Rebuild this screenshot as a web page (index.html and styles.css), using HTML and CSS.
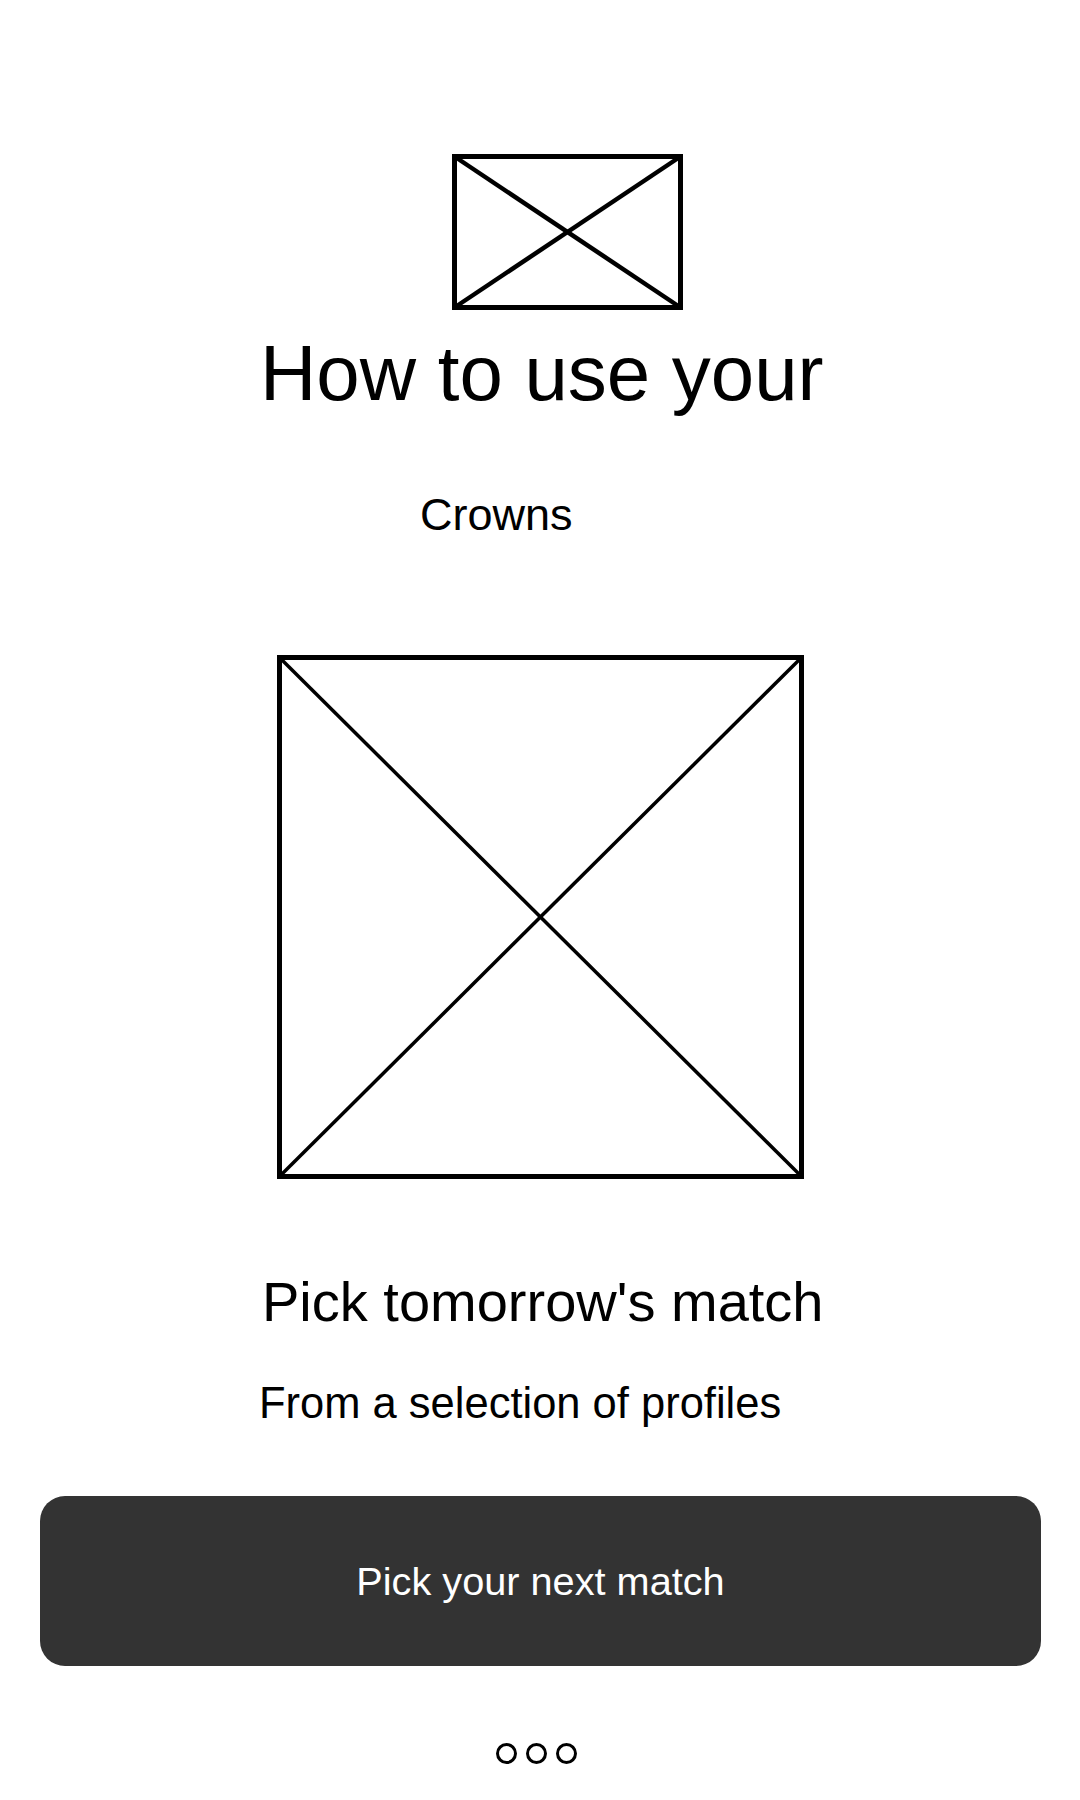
FILE: index.html
```html
<!DOCTYPE html>
<html lang="en">
<head>
<meta charset="utf-8">
<title>How to use your Crowns</title>
<link rel="stylesheet" href="styles.css">
</head>
<body>
<main class="screen">
  <svg class="logo" width="231" height="156" viewBox="0 0 231 156" aria-hidden="true">
    <rect x="2.5" y="2.5" width="226" height="151" fill="none" stroke="#000" stroke-width="5"/>
    <line x1="2.5" y1="2.5" x2="228.5" y2="153.5" stroke="#000" stroke-width="4.5"/>
    <line x1="228.5" y1="2.5" x2="2.5" y2="153.5" stroke="#000" stroke-width="4.5"/>
  </svg>
  <h1 class="title">How to use your</h1>
  <p class="subtitle">Crowns</p>
  <svg class="hero" width="527" height="524" viewBox="0 0 527 524" aria-hidden="true">
    <rect x="2.5" y="2.5" width="522" height="519" fill="none" stroke="#000" stroke-width="5"/>
    <line x1="3" y1="3" x2="524" y2="521" stroke="#000" stroke-width="3.5"/>
    <line x1="524" y1="3" x2="3" y2="521" stroke="#000" stroke-width="3.5"/>
  </svg>
  <h2 class="step-title">Pick tomorrow's match</h2>
  <p class="step-text">From a selection of profiles</p>
  <button class="cta" type="button">Pick your next match</button>
  <div class="dots" aria-hidden="true">
    <span class="dot"></span><span class="dot"></span><span class="dot"></span>
  </div>
</main>
</body>
</html>
```

FILE: styles.css
```css
html, body {
  margin: 0;
  padding: 0;
  background: #fff;
}

body {
  font-family: "Liberation Sans", Arial, sans-serif;
  color: #000;
}

.screen {
  width: 1080px;
  height: 1800px;
  display: flex;
  flex-direction: column;
  align-items: flex-start;
  padding-top: 154px;
  box-sizing: border-box;
}

.logo {
  display: block;
  margin-left: 452px;
}

.title {
  margin: 18px 0 0 260px;
  font-size: 78px;
  line-height: 90px;
  font-weight: 400;
}

.subtitle {
  margin: 72px 0 0 420px;
  font-size: 45px;
  line-height: 50px;
}

.hero {
  display: block;
  margin: 115px 0 0 277px;
}

.step-title {
  margin: 91px 0 0 262px;
  font-size: 56px;
  line-height: 64px;
  font-weight: 400;
}

.step-text {
  margin: 44px 0 0 259px;
  font-size: 43.5px;
  line-height: 50px;
}

.cta {
  margin: 68px 0 0 40px;
  width: 1001px;
  height: 170px;
  border: 0;
  border-radius: 25px;
  background: #333333;
  color: #fff;
  font-family: "Liberation Sans", Arial, sans-serif;
  font-size: 39.7px;
  padding: 0;
}

.dots {
  margin: 77px 0 0 496px;
  display: flex;
  gap: 9px;
}

.dot {
  width: 21px;
  height: 21px;
  box-sizing: border-box;
  border: 3px solid #000;
  border-radius: 50%;
}
```
